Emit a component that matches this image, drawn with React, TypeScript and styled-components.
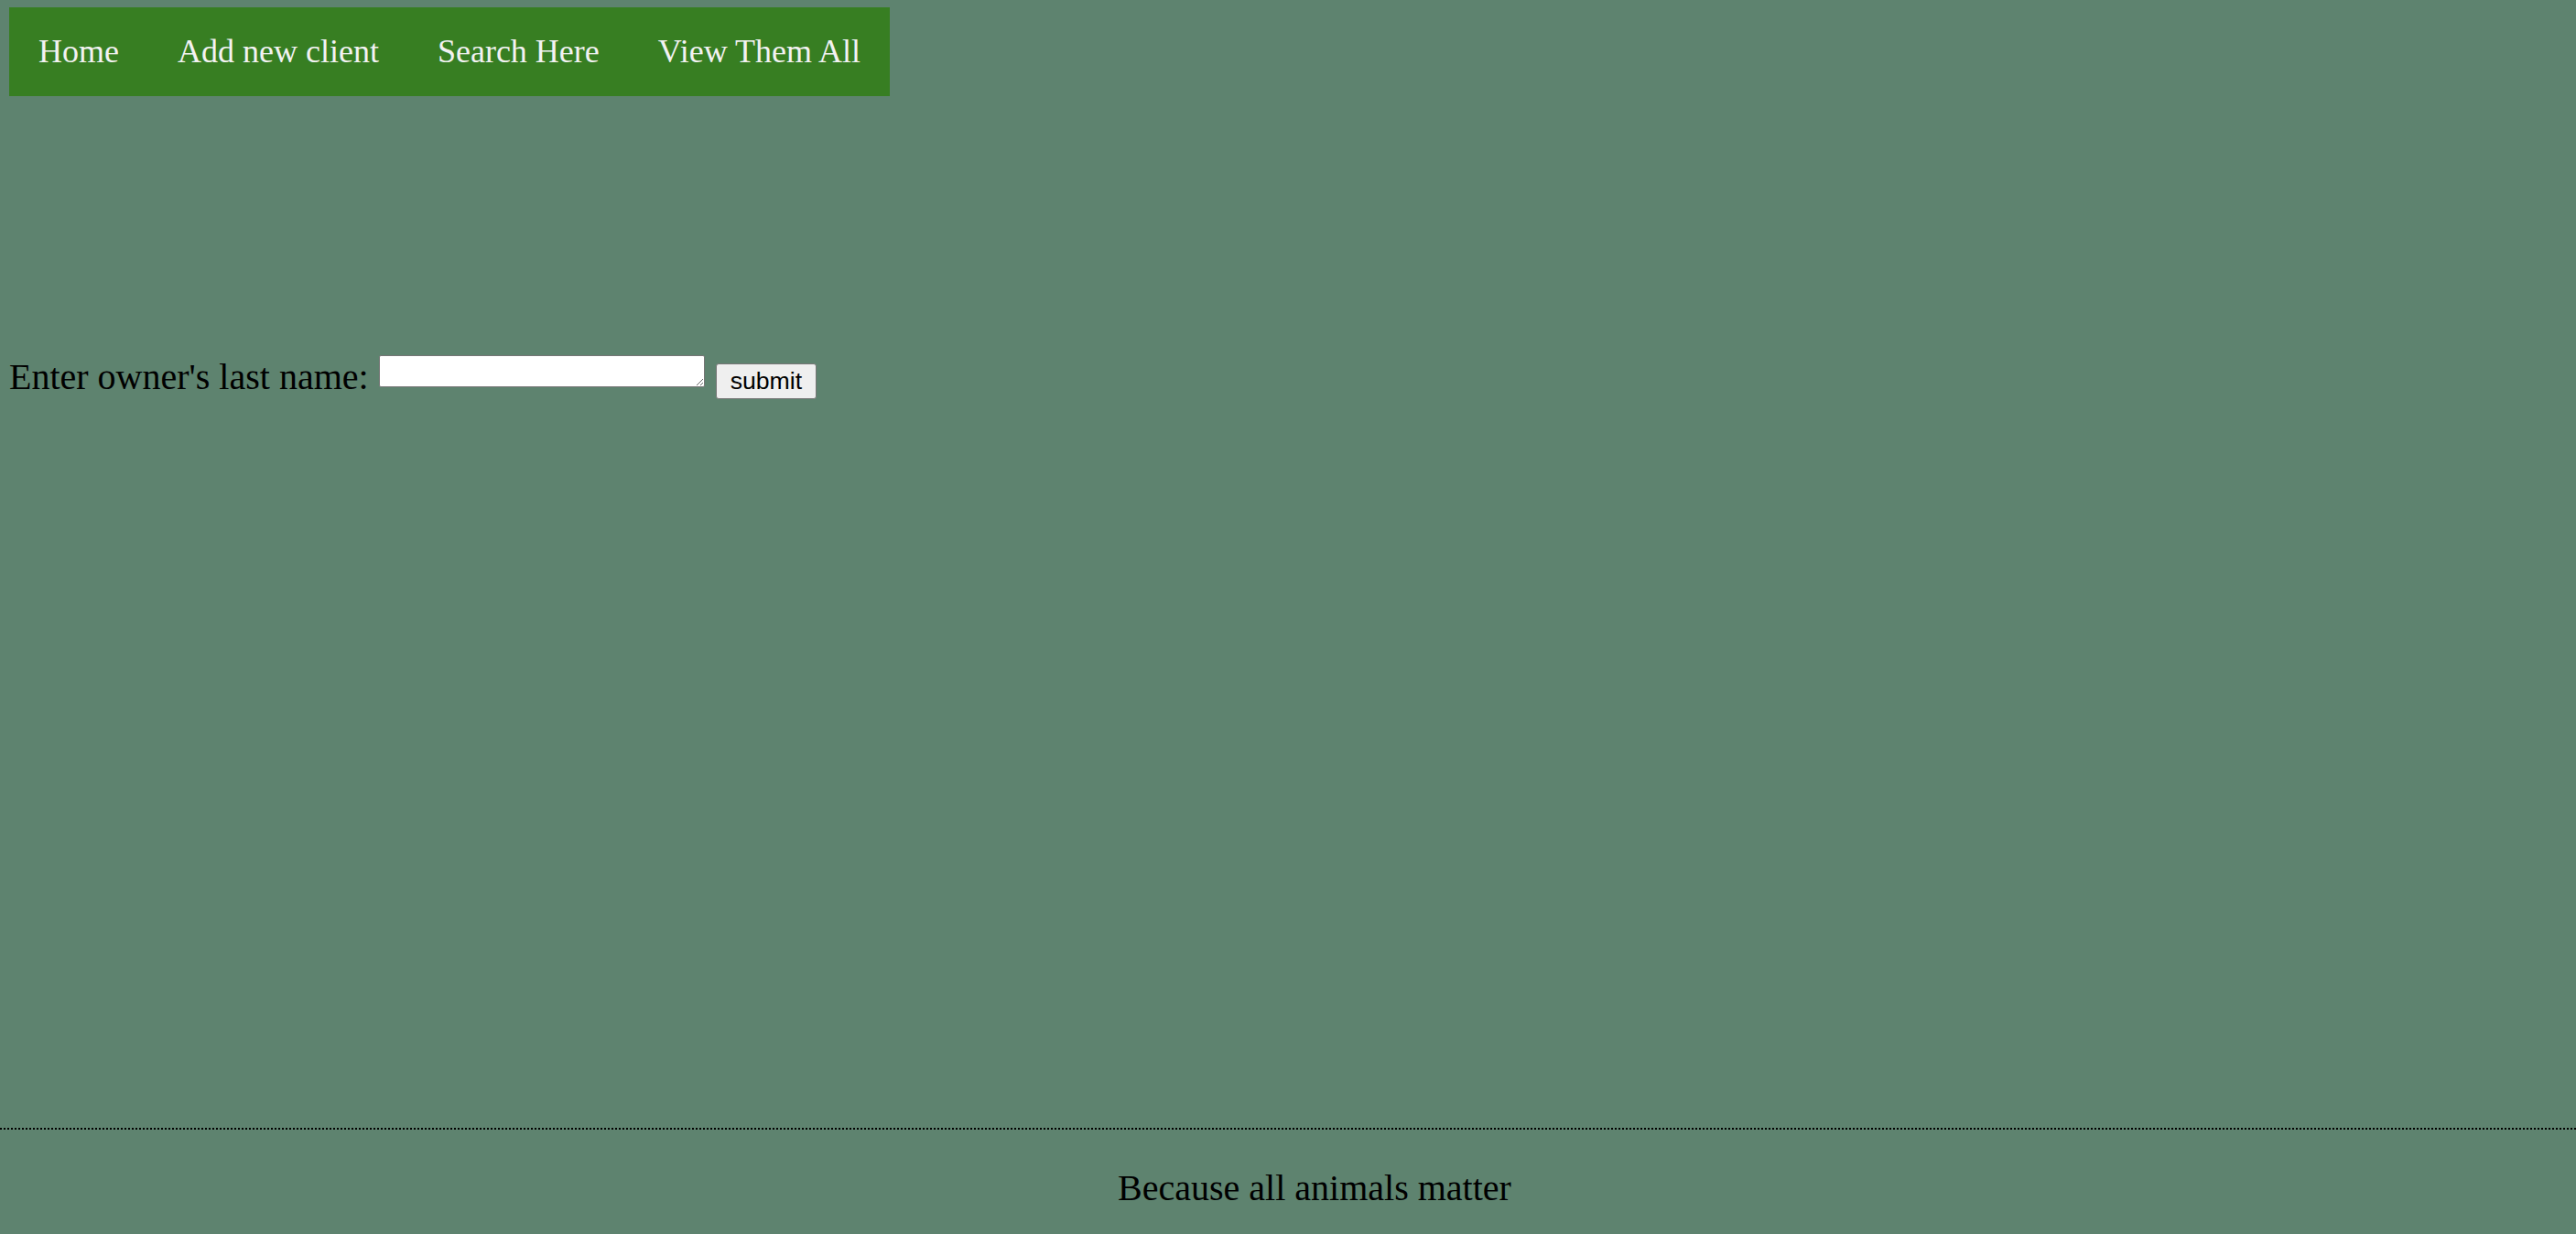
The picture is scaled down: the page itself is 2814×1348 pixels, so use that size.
import React from "react";
import styled, { createGlobalStyle } from "styled-components";

const GlobalStyle = createGlobalStyle`
  html, body {
    margin: 0;
    padding: 0;
    background: #5e836f;
  }
  body {
    font-family: "Liberation Serif", "Times New Roman", serif;
    color: #000;
  }
`;

const Page = styled.div`
  min-height: 100vh;
  display: flex;
  flex-direction: column;
  background: #5e836f;
`;

const Content = styled.div`
  flex: 1;
  padding: 8px 0 0 10px;
`;

const NavBar = styled.nav`
  display: inline-flex;
  background: #377e22;
`;

const NavLink = styled.a`
  display: block;
  padding: 28px 32px;
  font-family: "Liberation Serif", "Times New Roman", serif;
  font-size: 36px;
  line-height: 41px;
  color: #f2f2f2;
  text-decoration: none;
  cursor: pointer;
`;

const SearchForm = styled.form`
  margin-top: 283px;
  font-size: 40px;
  font-family: "Liberation Serif", "Times New Roman", serif;
`;

const NameInput = styled.textarea`
  box-sizing: border-box;
  width: 356px;
  height: 35px;
  margin: 0 1px 2px 1px;
  padding: 2px;
  border: 1px solid #767676;
  border-radius: 2px;
  background: #fff;
  font-family: "Liberation Mono", monospace;
  font-size: 13px;
  vertical-align: baseline;
`;

const SubmitButton = styled.button`
  box-sizing: border-box;
  height: 39px;
  margin: 0 0 0 1px;
  padding: 3px 15px;
  border: 1px solid #767676;
  border-radius: 3px;
  background: #efefef;
  color: #000;
  font-family: "Liberation Sans", Arial, sans-serif;
  font-size: 26.67px;
  vertical-align: baseline;
`;

const Footer = styled.footer`
  border-top: 2px dotted #000;
  height: 114px;
  padding-left: 58px;
  text-align: center;
`;

const Tagline = styled.p`
  margin: 40px 0 0;
  font-size: 40px;
  font-family: "Liberation Serif", "Times New Roman", serif;
`;

const links = ["Home", "Add new client", "Search Here", "View Them All"];

export default function App() {
  return (
    <>
      <GlobalStyle />
      <Page>
        <Content>
          <NavBar>
            {links.map((l) => (
              <NavLink key={l}>{l}</NavLink>
            ))}
          </NavBar>
          <SearchForm onSubmit={(e) => e.preventDefault()}>
            Enter owner's last name: <NameInput /> <SubmitButton type="submit">submit</SubmitButton>
          </SearchForm>
        </Content>
        <Footer>
          <Tagline>Because all animals matter</Tagline>
        </Footer>
      </Page>
    </>
  );
}
